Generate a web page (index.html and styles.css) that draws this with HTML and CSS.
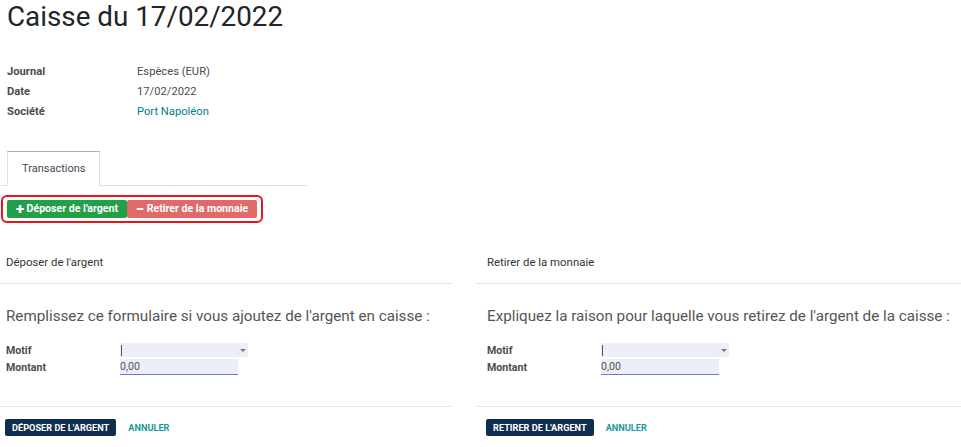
FILE: index.html
```html
<!DOCTYPE html>
<html lang="fr">
<head>
  <meta charset="UTF-8">
  <meta name="viewport" content="width=device-width, initial-scale=1.0">
  <title>Caisse du 17/02/2022</title>
  <link rel="stylesheet" href="styles.css">
</head>
<body>
  <div class="sheet">
    <h1 class="title">Caisse du 17/02/2022</h1>

    <div class="info">
      <div class="info-label">Journal</div>
      <div class="info-value">Espèces (EUR)</div>
      <div class="info-label">Date</div>
      <div class="info-value">17/02/2022</div>
      <div class="info-label">Société</div>
      <div class="info-value link">Port Napoléon</div>
    </div>

    <div class="tabs">
      <div class="tab active">Transactions</div>
    </div>

    <div class="action-box">
      <button class="btn-deposit"><span class="sign">+</span> Déposer de l'argent</button>
      <button class="btn-withdraw"><span class="sign">−</span> Retirer de la monnaie</button>
    </div>
  </div>

  <div class="panels">
    <div class="panel left">
      <div class="panel-header">Déposer de l'argent</div>
      <div class="panel-body">
        <p class="lead">Remplissez ce formulaire si vous ajoutez de l'argent en caisse :</p>
        <div class="form-grid">
          <label>Motif</label>
          <div class="select"><span class="caret-bar"></span><span class="arrow"></span></div>
          <label>Montant</label>
          <div class="amount">0,00</div>
        </div>
      </div>
      <div class="panel-footer">
        <button class="btn-primary">Déposer de l'argent</button>
        <button class="btn-link">Annuler</button>
      </div>
    </div>

    <div class="panel right">
      <div class="panel-header">Retirer de la monnaie</div>
      <div class="panel-body">
        <p class="lead">Expliquez la raison pour laquelle vous retirez de l'argent de la caisse :</p>
        <div class="form-grid">
          <label>Motif</label>
          <div class="select"><span class="caret-bar"></span><span class="arrow"></span></div>
          <label>Montant</label>
          <div class="amount">0,00</div>
        </div>
      </div>
      <div class="panel-footer">
        <button class="btn-primary">Retirer de l'argent</button>
        <button class="btn-link">Annuler</button>
      </div>
    </div>
  </div>
</body>
</html>
```

FILE: styles.css
```css
body {
  font-family: Roboto, 'Noto Sans', Arial, sans-serif;
  background: #fff;
  color: #4c4c4c;
  margin: 0;
  padding: 0;
}
.sheet {
  padding: 0 0 0 7px;
}
.title {
  margin: 0;
  font-size: 27.8px;
  font-weight: 400;
  line-height: 34px;
  color: #212529;
}
.info {
  display: grid;
  grid-template-columns: 130px auto;
  margin-top: 28px;
  font-size: 11.2px;
  line-height: 20px;
}
.info-label {
  font-weight: bold;
  color: #4c4c4c;
}
.info-value {
  color: #4c4c4c;
}
.info-value.link {
  color: #017e84;
}
.tabs {
  display: flex;
  width: 301px;
  margin: 29px 0 0 -7px;
  padding-left: 7px;
  border-bottom: 1px solid #dee2e6;
}
.tab {
  font-size: 11px;
  line-height: 33px;
  padding: 0 14px;
  color: #4a4556;
  border: 1px solid #dee2e6;
  border-top-color: #b7a6c6;
  border-bottom: none;
  margin-bottom: -1px;
  background: #fff;
  height: 35px;
  box-sizing: border-box;
}
.action-box {
  display: inline-flex;
  margin: 9px 0 0 -6px;
  padding: 3px 4px;
  border: 2px solid #e8141b;
  border-radius: 6px;
}
.action-box button {
  border: none;
  border-radius: 2px;
  color: #fff;
  font-family: inherit;
  font-weight: bold;
  font-size: 10.6px;
  height: 18px;
  line-height: 18px;
  padding: 0;
  white-space: nowrap;
  cursor: pointer;
}
.sign {
  font-size: 15px;
  font-weight: 900;
  line-height: 18px;
  vertical-align: top;
}
.btn-deposit {
  background: #21a049;
  width: 120px;
}
.btn-withdraw {
  background: #e0696a;
  width: 130px;
}
.panels {
  display: grid;
  grid-template-columns: 452px 485px;
  gap: 24px;
  margin-top: 17px;
}
.panel.left {
  --pad: 6px;
}
.panel.right {
  --pad: 11px;
}
.panel-header {
  height: 43px;
  line-height: 44px;
  padding-left: var(--pad);
  font-size: 11.4px;
  color: #333;
  border-bottom: 1px solid #e4e4e4;
}
.panel-body {
  box-sizing: border-box;
  padding: 22px 0 0 var(--pad);
  height: 123px;
  border-bottom: 1px solid #e4e4e4;
}
.lead {
  margin: 0 0 17px;
  font-size: 15.2px;
  line-height: 20px;
  white-space: nowrap;
  color: #555;
}
.form-grid {
  display: grid;
  grid-template-columns: 114px 128px;
  row-gap: 2px;
  align-items: center;
}
.form-grid label {
  font-size: 10.6px;
  font-weight: bold;
  color: #4c4c4c;
}
.select {
  position: relative;
  height: 14px;
  background: #eceef9;
}
.caret-bar {
  position: absolute;
  left: 1px;
  top: 2px;
  width: 1px;
  height: 11px;
  background: #555;
}
.arrow {
  position: absolute;
  right: 2px;
  top: 6px;
  border-left: 3px solid transparent;
  border-right: 3px solid transparent;
  border-top: 3px solid #777;
}
.amount {
  width: 118px;
  height: 16px;
  box-sizing: border-box;
  background: #eceef9;
  border-bottom: 1px solid #7174e0;
  font-size: 10.6px;
  line-height: 15px;
  color: #555;
}
.panel-footer {
  display: flex;
  align-items: center;
  gap: 12px;
  padding: 12px 0 0 calc(var(--pad) - 1px);
}
.btn-primary {
  background: #0f2d51;
  color: #fff;
  border: none;
  border-radius: 2px;
  font-family: inherit;
  font-weight: bold;
  font-size: 9.2px;
  text-transform: uppercase;
  height: 17px;
  padding: 0 7px;
  white-space: nowrap;
  cursor: pointer;
}
.btn-link {
  background: none;
  border: none;
  padding: 0;
  font-family: inherit;
  font-weight: bold;
  font-size: 9.2px;
  text-transform: uppercase;
  color: #1c9a98;
  cursor: pointer;
}
```
